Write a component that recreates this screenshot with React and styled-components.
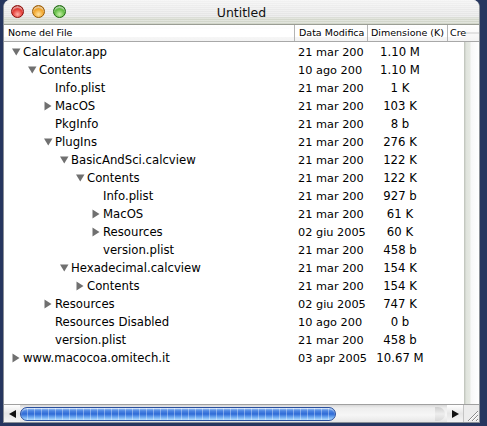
import styled, { createGlobalStyle } from "styled-components";

const GlobalStyle = createGlobalStyle`
    html, body {
        margin: 0;
        padding: 0;
        background: #26365f;
        width: 487px;
        height: 426px;
        overflow: hidden;
    }
    #root {
        font-family: "DejaVu Sans", "Liberation Sans", sans-serif;
    }
`;

const rows = [
    [0, "open", "Calculator.app", "21 mar 200", "1.10 M"],
    [1, "open", "Contents", "10 ago 200", "1.10 M"],
    [2, null, "Info.plist", "21 mar 200", "1 K"],
    [2, "closed", "MacOS", "21 mar 200", "103 K"],
    [2, null, "PkgInfo", "21 mar 200", "8 b"],
    [2, "open", "PlugIns", "21 mar 200", "276 K"],
    [3, "open", "BasicAndSci.calcview", "21 mar 200", "122 K"],
    [4, "open", "Contents", "21 mar 200", "122 K"],
    [5, null, "Info.plist", "21 mar 200", "927 b"],
    [5, "closed", "MacOS", "21 mar 200", "61 K"],
    [5, "closed", "Resources", "02 giu 2005", "60 K"],
    [5, null, "version.plist", "21 mar 200", "458 b"],
    [3, "open", "Hexadecimal.calcview", "21 mar 200", "154 K"],
    [4, "closed", "Contents", "21 mar 200", "154 K"],
    [2, "closed", "Resources", "02 giu 2005", "747 K"],
    [2, null, "Resources Disabled", "10 ago 200", "0 b"],
    [2, null, "version.plist", "21 mar 200", "458 b"],
    [0, "closed", "www.macocoa.omitech.it", "03 apr 2005", "10.67 M"],
];

const Twisty = ({ state }) => {
    if (state === "open") {
        return (
            <TwistyBox>
                <svg width="9" height="8" viewBox="0 0 9 8">
                    <path d="M0 0.5 L8.5 0.5 L4.25 7.5 Z" fill="#707070" />
                </svg>
            </TwistyBox>
        );
    }
    if (state === "closed") {
        return (
            <TwistyBox>
                <svg width="8" height="10" viewBox="0 0 8 10">
                    <path d="M0.5 0.5 L7.5 5 L0.5 9.5 Z" fill="#707070" />
                </svg>
            </TwistyBox>
        );
    }
    return <TwistyBox />;
};

export default function App() {
    return (
        <>
            <GlobalStyle />
            <Desktop>
                <Window>
                    <TitleBar>
                        <Lights>
                            <Light $c1="#ffb0a8" $c2="#e0302a" $c3="#8a0c08" />
                            <Light $c1="#ffe2a0" $c2="#f0a020" $c3="#9a5a00" />
                            <Light $c1="#c8f0a8" $c2="#58b838" $c3="#1e6a10" />
                        </Lights>
                        <Title>Untitled</Title>
                    </TitleBar>
                    <HeaderRow>
                        <HeadCell>Nome del File</HeadCell>
                        <HeadCell>Data Modifica</HeadCell>
                        <HeadCell>Dimensione (K)</HeadCell>
                        <HeadCell>Cre</HeadCell>
                        <HeadFiller />
                    </HeaderRow>
                    <Main>
                        <Body>
                            {rows.map(([level, state, name, date, size], i) => (
                                <Row key={i}>
                                    <NameCell $level={level}>
                                        <Twisty state={state} />
                                        <span>{name}</span>
                                    </NameCell>
                                    <DateCell>{date}</DateCell>
                                    <SizeCell>{size}</SizeCell>
                                    <div />
                                </Row>
                            ))}
                        </Body>
                        <VScroll />
                    </Main>
                    <HScroll>
                        <ArrowBtn>
                            <svg width="7" height="8" viewBox="0 0 7 8">
                                <path d="M7 0 L0 4 L7 8 Z" fill="#111" />
                            </svg>
                        </ArrowBtn>
                        <Track>
                            <Thumb />
                            <TrackEnd />
                        </Track>
                        <ArrowBtn>
                            <svg width="7" height="8" viewBox="0 0 7 8">
                                <path d="M0 0 L7 4 L0 8 Z" fill="#111" />
                            </svg>
                        </ArrowBtn>
                        <Grip>
                            <svg width="14" height="14" viewBox="0 0 14 14">
                                <path d="M3 13 L13 3 M7 13 L13 7 M11 13 L13 11" stroke="#8a8a8a" strokeWidth="1" />
                                <path d="M4 13 L13 4 M8 13 L13 8 M12 13 L13 12" stroke="#ffffff" strokeWidth="1" />
                            </svg>
                        </Grip>
                    </HScroll>
                </Window>
            </Desktop>
        </>
    );
}

const Desktop = styled.div`
    width: 487px;
    height: 426px;
    padding: 0 7px 0 3px;
    box-sizing: border-box;
    background: #26365f;
`;

const Window = styled.div`
    width: 477px;
    height: 423px;
    display: flex;
    flex-direction: column;
    background: #ffffff;
    border-radius: 7px 7px 0 0;
    border: 1px solid #8a8f96;
    border-top: none;
    box-sizing: border-box;
    overflow: hidden;
`;

const TitleBar = styled.div`
    height: 24px;
    flex-shrink: 0;
    position: relative;
    display: flex;
    align-items: center;
    justify-content: center;
    background:
        repeating-linear-gradient(180deg, rgba(255,255,255,0.35) 0 1px, rgba(0,0,0,0) 1px 2px),
        linear-gradient(180deg, #f2f2f2 0%, #e4e4e4 70%, #d5d9ce 75%, #d2d6ca 100%);
    border-bottom: 1px solid #9a9d94;
`;

const Lights = styled.div`
    position: absolute;
    left: 7px;
    top: 5px;
    display: flex;
    gap: 8px;
`;

const Light = styled.div`
    width: 13px;
    height: 13px;
    border-radius: 50%;
    box-sizing: border-box;
    border: 1px solid ${p => p.$c3};
    background: radial-gradient(circle at 50% 75%, ${p => p.$c1} 0%, ${p => p.$c2} 55%, ${p => p.$c3} 100%);
    box-shadow: inset 0 2px 1px rgba(255,255,255,0.55);
`;

const Title = styled.div`
    font-size: 12.5px;
    color: #111;
    margin-top: 1px;
`;

const cols = "291px 73px 80px 1fr";

const HeaderRow = styled.div`
    display: grid;
    grid-template-columns: 291px 73px 80px 17px 1fr;
    height: 16px;
    flex-shrink: 0;
    border-bottom: 1px solid #a8a8a8;
    background:
        linear-gradient(180deg, rgba(0,0,0,0) 7px, #e2e2e2 7px, #e2e2e2 9px, rgba(0,0,0,0) 9px),
        linear-gradient(180deg, #ffffff, #f3f3f3);
`;

const HeadCell = styled.div`
    font-size: 9.5px;
    line-height: 16px;
    padding-left: 4px;
    color: #000;
    white-space: nowrap;
    overflow: hidden;
    border-right: 1px solid #b4b4b4;
    background: linear-gradient(180deg, rgba(255,255,255,0) 4px, #ffffff 4px, #ffffff 12px, rgba(255,255,255,0) 12px);

    &:nth-child(3) {
        padding-left: 3px;
    }
    &:nth-child(4) {
        border-right: none;
        padding-left: 2px;
        overflow: visible;
    }
`;

const HeadFiller = styled.div``;

const Main = styled.div`
    flex: 1;
    display: flex;
    min-height: 0;
`;

const Body = styled.div`
    flex: 1;
    padding-top: 1px;
    overflow: hidden;
`;

const Row = styled.div`
    display: grid;
    grid-template-columns: ${cols};
    height: 18px;
    align-items: center;
    font-size: 11.7px;
    color: #000;
`;

const NameCell = styled.div`
    display: flex;
    align-items: center;
    padding-left: ${p => 8 + p.$level * 16}px;
    white-space: nowrap;
`;

const TwistyBox = styled.span`
    width: 11px;
    flex-shrink: 0;
    display: flex;
    align-items: center;
`;

const DateCell = styled.div`
    padding-left: 3px;
    font-size: 11.3px;
    white-space: nowrap;
`;

const SizeCell = styled.div`
    text-align: center;
    padding-right: 16px;
    white-space: nowrap;
`;

const VScroll = styled.div`
    width: 14px;
    flex-shrink: 0;
    background: linear-gradient(90deg, #c9cdc6 0px, #dfe3dc 1px, #e6e9e3 5px, #f8f8f8 6px, #ffffff 100%);
    border-left: 1px solid #c4c8c0;
`;

const HScroll = styled.div`
    height: 17px;
    flex-shrink: 0;
    display: flex;
    align-items: stretch;
    border-top: 1px solid #a0a0a0;
    background: linear-gradient(180deg, #f4f4f4, #e4e4e4 50%, #f6f6f6);
`;

const ArrowBtn = styled.div`
    width: 16px;
    display: flex;
    align-items: center;
    justify-content: center;
    background: linear-gradient(180deg, #ffffff, #e6e6e6 50%, #f4f4f4);
`;

const Track = styled.div`
    flex: 1;
    display: flex;
    align-items: center;
    padding: 0 2px 0 0;
    background: linear-gradient(180deg, #d8d8d8 0, #eeeeee 3px, #f6f6f6 60%, #e6e6e6 100%);
`;

const Thumb = styled.div`
    width: 316px;
    height: 14px;
    border-radius: 7px;
    box-sizing: border-box;
    border: 1px solid #2a4f9c;
    background:
        repeating-linear-gradient(90deg, rgba(255,255,255,0) 0 6px, rgba(255,255,255,0.35) 6px 7px),
        linear-gradient(180deg, #9cc2f4 0%, #4d86e2 25%, #2f6ad6 50%, #6aa6f0 75%, #b4dcfc 100%);
    box-shadow: inset 0 1px 1px rgba(255,255,255,0.6);
`;

const TrackEnd = styled.div`
    margin-left: auto;
    width: 10px;
    height: 14px;
    border-radius: 0 7px 7px 0;
    background: linear-gradient(180deg, #cfcfcf, #eeeeee 50%, #d8d8d8);
`;

const Grip = styled.div`
    width: 15px;
    display: flex;
    align-items: flex-end;
    justify-content: flex-end;
    background: #ececec;
    border-left: 1px solid #c4c4c4;
`;
